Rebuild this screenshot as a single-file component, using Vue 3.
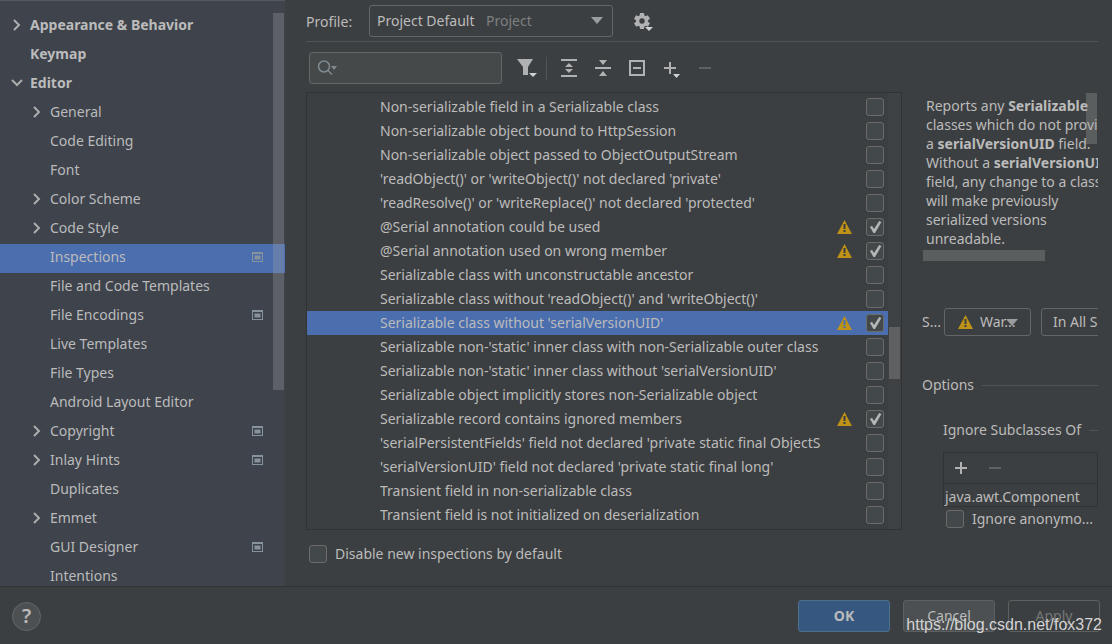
<script setup>
import { ref } from 'vue'

const tree = [
  { label: 'Appearance & Behavior', level: 0, arrow: 'right' },
  { label: 'Keymap', level: 0 },
  { label: 'Editor', level: 0, arrow: 'down' },
  { label: 'General', level: 1, arrow: 'right' },
  { label: 'Code Editing', level: 1 },
  { label: 'Font', level: 1 },
  { label: 'Color Scheme', level: 1, arrow: 'right' },
  { label: 'Code Style', level: 1, arrow: 'right' },
  { label: 'Inspections', level: 1, project: true, selected: true },
  { label: 'File and Code Templates', level: 1 },
  { label: 'File Encodings', level: 1, project: true },
  { label: 'Live Templates', level: 1 },
  { label: 'File Types', level: 1 },
  { label: 'Android Layout Editor', level: 1 },
  { label: 'Copyright', level: 1, arrow: 'right', project: true },
  { label: 'Inlay Hints', level: 1, arrow: 'right', project: true },
  { label: 'Duplicates', level: 1 },
  { label: 'Emmet', level: 1, arrow: 'right' },
  { label: 'GUI Designer', level: 1, project: true },
  { label: 'Intentions', level: 1 }
]

const inspections = ref([
  { label: 'Non-serializable field in a Serializable class', on: false },
  { label: 'Non-serializable object bound to HttpSession', on: false },
  { label: 'Non-serializable object passed to ObjectOutputStream', on: false },
  { label: "'readObject()' or 'writeObject()' not declared 'private'", on: false },
  { label: "'readResolve()' or 'writeReplace()' not declared 'protected'", on: false },
  { label: '@Serial annotation could be used', on: true },
  { label: '@Serial annotation used on wrong member', on: true },
  { label: 'Serializable class with unconstructable ancestor', on: false },
  { label: "Serializable class without 'readObject()' and 'writeObject()'", on: false },
  { label: "Serializable class without 'serialVersionUID'", on: true, selected: true },
  { label: "Serializable non-'static' inner class with non-Serializable outer class", on: false },
  { label: "Serializable non-'static' inner class without 'serialVersionUID'", on: false },
  { label: 'Serializable object implicitly stores non-Serializable object', on: false },
  { label: 'Serializable record contains ignored members', on: true },
  { label: "'serialPersistentFields' field not declared 'private static final ObjectS", on: false },
  { label: "'serialVersionUID' field not declared 'private static final long'", on: false },
  { label: 'Transient field in non-serializable class', on: false },
  { label: 'Transient field is not initialized on deserialization', on: false }
])

const teeth = [0, 60, 120, 180, 240, 300]
const query = ref('')
const disableNew = ref(false)
const ignoreAnonymous = ref(false)
</script>

<template>
  <div class="dialog">
    <div class="body">
      <nav class="sidebar" aria-label="Settings">
        <ul class="tree">
          <li v-for="n in tree" :key="n.label">
            <a href="#" class="node" :class="['level' + n.level, { selected: n.selected }]">
              <span class="arrow">
                <svg v-if="n.arrow === 'right'" width="13" height="12" viewBox="0 0 13 12"><path d="M4 1l5 5-5 5" /></svg>
                <svg v-if="n.arrow === 'down'" width="13" height="12" viewBox="0 0 13 12"><path d="M2 3l5 5 5-5" /></svg>
              </span>
              <span class="node-label">{{ n.label }}</span>
              <svg v-if="n.project" class="project" width="11" height="10" viewBox="0 0 11 10">
                <path d="M0 0h11v10H0zM1 2v7h9V2z" fill-rule="evenodd" /><path d="M2.500 3.500h6v4h-6z" />
              </svg>
            </a>
          </li>
        </ul>
        <span class="thumb side-thumb"></span>
      </nav>

      <main class="main">
        <div class="profile">
          <label for="profile">Profile:</label>
          <span class="combo profile-combo">
            <select id="profile"><option>Project Default</option></select>
            <span class="hint">Project</span>
            <svg class="caret" width="12" height="7" viewBox="0 0 12 7"><path d="M0 0h12L6 7z" /></svg>
          </span>
          <button class="tool gear" aria-label="Profile actions">
            <svg width="20" height="22" viewBox="0 0 20 22">
              <g transform="translate(9 11)">
                <circle r="4.300" fill="none" stroke="#afb1b3" stroke-width="3.200" />
                <path v-for="a in teeth" :key="a" d="M-2-8h4l.5 3.500h-5z" :transform="`rotate(${a})`" />
              </g>
              <path class="mini" d="M12 17h8l-4 4z" />
            </svg>
          </button>
        </div>

        <div class="content">
          <section class="left">
            <div class="toolbar">
              <span class="search">
                <svg width="22" height="18" viewBox="0 0 22 18"><circle cx="7" cy="7.500" r="5.500" /><path d="M11 11.500l4 4" /><path class="solid" d="M14 7h6l-3 4z" /></svg>
                <input v-model="query" type="text" aria-label="Search inspections" />
              </span>
              <button class="tool filter" aria-label="Filter">
                <svg width="20" height="20" viewBox="0 0 20 20"><path d="M0 1h16l-5 8v8H6V9z" /><path class="mini" d="M12 15h8l-4 4z" /></svg>
              </button>
              <span class="divider"></span>
              <button class="tool" aria-label="Expand all">
                <svg width="18" height="18" viewBox="0 0 18 18"><path d="M1 0h16v2H1zM1 16h16v2H1zM9 4l4 4H5zM9 14l4-4H5z" /></svg>
              </button>
              <button class="tool" aria-label="Collapse all">
                <svg width="18" height="18" viewBox="0 0 18 18"><path d="M1 8h16v2H1zM5 1h8L9 6zM5 17h8l-4-5z" /></svg>
              </button>
              <button class="tool" aria-label="Reset to empty">
                <svg width="18" height="18" viewBox="0 0 18 18"><path fill-rule="evenodd" d="M1 1h16v16H1zM3 3v12h12V3zM5 8h8v2H5z" /></svg>
              </button>
              <button class="tool" aria-label="Add">
                <svg width="18" height="20" viewBox="0 0 18 20"><path d="M7 4h2v5h5v2H9v5H7v-5H2V9h5z" /><path class="mini" d="M11 16h7l-3.500 4z" /></svg>
              </button>
              <button class="tool dim" aria-label="Remove" disabled>
                <svg width="18" height="18" viewBox="0 0 18 18"><path d="M3 8h12v2H3z" /></svg>
              </button>
            </div>

            <div class="list-box">
              <ul class="list">
                <li v-for="row in inspections" :key="row.label">
                  <label class="row" :class="{ selected: row.selected }">
                    <span class="row-label">{{ row.label }}</span>
                    <svg class="warn" :class="{ hidden: !row.on }" width="15" height="14" viewBox="0 0 15 14"><path fill-rule="evenodd" d="M7.500 0L15 14H0zM6.500 4v5h2V4zM6.500 10v2h2v-2z" /></svg>
                    <input v-model="row.on" type="checkbox" />
                  </label>
                </li>
              </ul>
              <div class="track"><span class="thumb list-thumb"></span></div>
            </div>

            <label class="check disable">
              <input v-model="disableNew" type="checkbox" />
              <span>Disable new inspections by default</span>
            </label>
          </section>

          <aside class="right">
            <div class="description">
              <p>
                <span>Reports any <b>Serializable</b></span>
                <span>classes which do not provide</span>
                <span>a <b>serialVersionUID</b> field.</span>
                <span>Without a <b>serialVersionUID</b></span>
                <span>field, any change to a class</span>
                <span>will make previously</span>
                <span>serialized versions</span>
                <span>unreadable.</span>
              </p>
              <span class="thumb desc-v"></span>
              <span class="thumb desc-h"></span>
            </div>

            <div class="severity">
              <label for="severity">S...</label>
              <span class="combo severity-combo">
                <svg class="warn" width="15" height="14" viewBox="0 0 15 14"><path fill-rule="evenodd" d="M7.500 0L15 14H0zM6.500 4v5h2V4zM6.500 10v2h2v-2z" /></svg>
                <select id="severity"><option>War...</option></select>
                <svg class="caret" width="12" height="7" viewBox="0 0 12 7"><path d="M0 0h12L6 7z" /></svg>
              </span>
              <span class="combo scope-combo">
                <select aria-label="Scope"><option>In All Scopes</option></select>
              </span>
            </div>

            <h2 class="heading">Options</h2>
            <div class="options">
              <h3 class="heading sub">Ignore Subclasses Of</h3>
              <div class="classes">
                <div class="class-tools">
                  <button class="tool" aria-label="Add class">
                    <svg width="14" height="14" viewBox="0 0 14 14"><path d="M6 1h2v5h5v2H8v5H6V8H1V6h5z" /></svg>
                  </button>
                  <button class="tool dim" aria-label="Remove class" disabled>
                    <svg width="14" height="14" viewBox="0 0 14 14"><path d="M1 6h12v2H1z" /></svg>
                  </button>
                </div>
                <ul><li>java.awt.Component</li></ul>
              </div>
              <label class="check anonymous">
                <input v-model="ignoreAnonymous" type="checkbox" />
                <span>Ignore anonymo...</span>
              </label>
            </div>
          </aside>
        </div>
      </main>
    </div>

    <footer class="footer">
      <button class="help" aria-label="Help">?</button>
      <button class="btn primary">OK</button>
      <button class="btn">Cancel</button>
      <button class="btn off" disabled>Apply</button>
      <span class="watermark">https://blog.csdn.net/fox372</span>
    </footer>
  </div>
</template>

<style>
body {
  background: #3c3f41;
}
</style>

<style scoped>
* {
  box-sizing: border-box;
}
ul, p, h2, h3 {
  margin: 0;
  padding: 0;
  list-style: none;
  font-size: 14px;
  font-weight: 400;
}
.dialog {
  display: flex;
  flex-direction: column;
  height: 100vh;
  overflow: hidden;
  background: #3c3f41;
  color: #bbbbbb;
  font-family: "Noto Sans", "Open Sans", sans-serif;
  font-size: 14px;
  line-height: 20px;
}
button, select, input {
  margin: 0;
  font: inherit;
  color: inherit;
}
svg {
  display: block;
  flex: none;
}
.body {
  display: flex;
  flex: 1;
  min-height: 0;
}

.sidebar {
  position: relative;
  flex: none;
  width: 285px;
  padding-top: 11px;
  overflow: hidden;
  background: #3e434c;
  border-top: 1px solid #55585c;
}
.node {
  display: flex;
  align-items: center;
  height: 29px;
  padding: 0 22px 3px 10px;
  color: inherit;
  text-decoration: none;
}
.node.level0 {
  font-weight: 700;
}
.node.level1 {
  padding-left: 30px;
}
.node.selected {
  background: #4b6eaf;
}
.arrow {
  width: 20px;
}
.arrow path {
  fill: none;
  stroke: #adadad;
  stroke-width: 2;
}
.node-label {
  flex: 1;
}
.project {
  fill: #87939a;
}
.thumb {
  position: absolute;
  background: rgba(166, 166, 166, 0.3);
}
.side-thumb {
  top: 12px;
  right: 1px;
  width: 11px;
  height: 377px;
}

.main {
  display: flex;
  flex: 1;
  flex-direction: column;
  min-width: 0;
  padding: 0 14px 0 21px;
}
.profile {
  display: flex;
  align-items: center;
  height: 42px;
  border-bottom: 1px solid #515456;
}
.profile label {
  width: 63px;
  padding-top: 2px;
}
.combo {
  position: relative;
  display: flex;
  align-items: center;
  flex: none;
  border: 1px solid #646668;
  border-radius: 3px;
}
.combo select {
  width: 100%;
  height: 100%;
  padding: 0 0 0 7px;
  appearance: none;
  background: transparent;
  border: 0;
}
.profile-combo {
  width: 244px;
  height: 32px;
}
.hint {
  position: absolute;
  left: 116px;
  top: 5px;
  color: #7c7f80;
  pointer-events: none;
}
.caret {
  position: absolute;
  right: 9px;
  fill: #9a9da0;
  pointer-events: none;
}
.tool {
  display: flex;
  align-items: center;
  justify-content: center;
  width: 34px;
  height: 32px;
  padding: 0;
  background: transparent;
  border: 0;
  fill: #afb1b3;
}
.mini {
  fill: #d0d2d4;
}
.dim {
  fill: #5f6163;
}
.gear {
  margin-left: 13px;
}

.content {
  display: flex;
  flex: 1;
  min-height: 0;
}
.left {
  display: flex;
  flex: 1;
  flex-direction: column;
  min-width: 0;
  margin-right: 20px;
}
.toolbar {
  display: flex;
  align-items: center;
  height: 50px;
  padding: 2px 0 0 3px;
}
.search {
  display: flex;
  align-items: center;
  width: 193px;
  height: 32px;
  padding-left: 7px;
  background: #45494a;
  border: 1px solid #646668;
  border-radius: 3px;
}
.search svg {
  fill: none;
  stroke: #7f8b91;
  stroke-width: 1.500;
}
.search .solid {
  fill: #7f8b91;
  stroke: none;
}
.search input {
  flex: 1;
  min-width: 0;
  background: transparent;
  border: 0;
  outline: 0;
}
.filter {
  margin-left: 8px;
}
.divider {
  width: 1px;
  height: 23px;
  margin: 0 5px 0 2px;
  background: #515456;
}
.list-box {
  display: flex;
  flex: none;
  border: 1px solid #323232;
}
.list {
  flex: 1;
  min-width: 0;
  padding: 2px 0;
}
.row {
  display: flex;
  align-items: center;
  height: 24px;
  padding: 0 4px 0 73px;
}
.row.selected {
  background: #4b6eaf;
}
.row-label {
  flex: 1;
  min-width: 0;
  overflow: hidden;
  white-space: nowrap;
}
.warn {
  margin: 0 14px 0 5px;
  fill: #be9117;
}
.hidden {
  visibility: hidden;
}
input[type="checkbox"] {
  flex: none;
  width: 18px;
  height: 18px;
  appearance: none;
  background: #43494a;
  border: 1px solid #6b6b6b;
  border-radius: 3px;
}
input[type="checkbox"]:checked::before {
  display: block;
  width: 16px;
  height: 16px;
  background: #b4b6b8;
  clip-path: polygon(18% 48%, 32% 44%, 44% 62%, 76% 12%, 90% 18%, 50% 88%, 40% 88%);
  content: "";
}
.track {
  position: relative;
  width: 13px;
  background: #3f4244;
}
.list-thumb {
  top: 234px;
  right: 1px;
  width: 11px;
  height: 52px;
}
.check {
  display: flex;
  align-items: center;
  gap: 8px;
}
.disable {
  padding: 14px 0 0 3px;
}

.right {
  flex: none;
  width: 176px;
  padding-top: 51px;
  overflow: hidden;
  white-space: nowrap;
}
.description {
  position: relative;
  height: 168px;
  padding: 3px 0 0 4px;
  overflow: hidden;
  line-height: 19px;
}
.description p span {
  display: block;
}
.desc-v {
  top: 0;
  right: 1px;
  width: 11px;
  height: 51px;
}
.desc-h {
  bottom: 0;
  left: 1px;
  width: 122px;
  height: 11px;
}
.severity {
  display: flex;
  align-items: center;
  margin-top: 47px;
}
.severity label {
  flex: none;
  width: 22px;
}
.severity-combo {
  width: 87px;
  height: 28px;
  margin-right: 10px;
}
.severity-combo .warn {
  margin: 0 0 0 13px;
}
.severity-combo .caret {
  right: 12px;
}
.scope-combo {
  width: 120px;
  height: 28px;
}
.scope-combo select {
  padding-left: 11px;
}
.heading {
  display: flex;
  align-items: center;
  gap: 8px;
  margin-top: 39px;
  line-height: 20px;
}
.heading::after {
  flex: 1;
  height: 1px;
  background: #515456;
  content: "";
}
.options {
  padding-left: 21px;
}
.sub {
  margin-top: 25px;
}
.classes {
  margin-top: 12px;
  border: 1px solid #323232;
}
.class-tools {
  display: flex;
  height: 31px;
  border-bottom: 1px solid #323232;
}
.class-tools .tool {
  height: 30px;
}
.classes li {
  height: 22px;
  padding: 3px 0 0 1px;
  overflow: hidden;
  line-height: 20px;
}
.anonymous {
  padding: 2px 0 0 3px;
}

.footer {
  position: relative;
  display: flex;
  flex: none;
  align-items: center;
  gap: 13px;
  height: 58px;
  padding: 1px 12px 0 12px;
  border-top: 1px solid #323232;
}
.help {
  width: 29px;
  height: 29px;
  margin-right: auto;
  padding: 0;
  background: #4c5052;
  border: 1px solid #646668;
  border-radius: 50%;
  font-size: 20px;
  font-weight: 600;
  line-height: 20px;
}
.btn {
  width: 92px;
  height: 32px;
  padding: 0;
  background: #4c5052;
  border: 1px solid #5e6060;
  border-radius: 3px;
}
.primary {
  background: #365880;
  border-color: #4c708c;
  font-weight: 700;
}
.off {
  background: transparent;
  color: #777777;
}
.watermark {
  position: absolute;
  right: 10px;
  bottom: 9px;
  color: #d4d4d4;
  font-family: "Liberation Sans", Arial, sans-serif;
  font-size: 16px;
  pointer-events: none;
}
</style>
